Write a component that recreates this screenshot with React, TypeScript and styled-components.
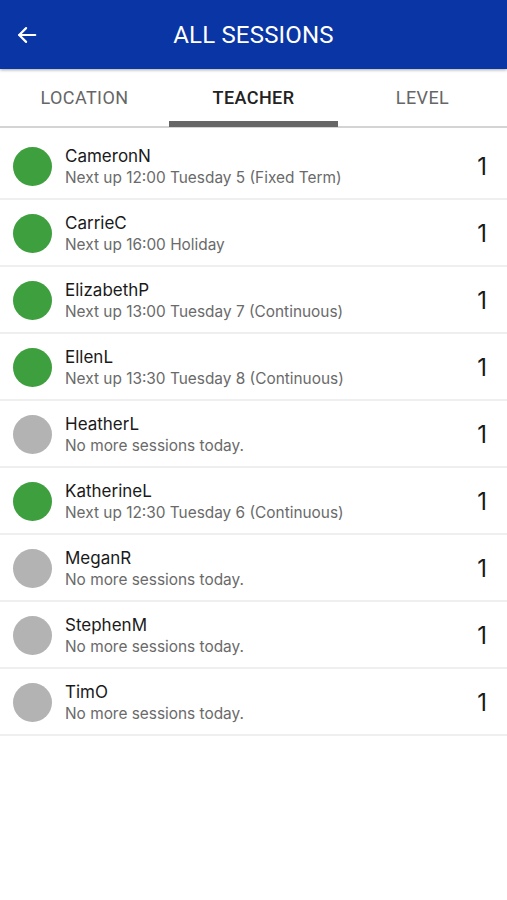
import React from "react";
import styled, { createGlobalStyle } from "styled-components";

const Global = createGlobalStyle`
  html, body { margin: 0; padding: 0; background: #fff; }
  body { font-family: Inter, "Liberation Sans", Arial, sans-serif; }
  * { box-sizing: border-box; }
`;

const Page = styled.div`
  width: 507px;
  min-height: 900px;
  background: #fff;
  display: flex;
  flex-direction: column;
`;

const Header = styled.header`
  height: 69px;
  background: #0a35a5;
  display: flex;
  align-items: center;
  position: relative;
  z-index: 2;
  box-shadow: 0 1px 3px rgba(0, 0, 0, 0.35);
`;

const BackButton = styled.button`
  width: 56px;
  height: 69px;
  border: none;
  background: none;
  padding: 0 0 0 16px;
  display: flex;
  align-items: center;
  color: #fff;
`;

const Title = styled.h1`
  flex: 1;
  margin: 0 56px 0 0;
  text-align: center;
  color: #fff;
  font-family: Roboto, "Liberation Sans", sans-serif;
  font-size: 24px;
  font-weight: 400;
  letter-spacing: 0.2px;
`;

const Tabs = styled.nav`
  display: grid;
  grid-template-columns: repeat(3, 1fr);
  height: 59px;
  border-bottom: 2px solid #d4d4d4;
`;

const Tab = styled.div<{ $active?: boolean }>`
  display: flex;
  align-items: center;
  justify-content: center;
  position: relative;
  font-family: Roboto, "Liberation Sans", sans-serif;
  font-size: 18px;
  letter-spacing: 0.4px;
  font-weight: ${(p) => (p.$active ? 500 : 400)};
  color: ${(p) => (p.$active ? "#222" : "#666")};
  padding-bottom: 1px;
`;

const Indicator = styled.span`
  position: absolute;
  left: 0;
  right: 0;
  bottom: -1px;
  height: 6px;
  background: #666;
`;

const List = styled.ul`
  list-style: none;
  margin: 5px 0 0;
  padding: 0;
`;

const Row = styled.li`
  height: 67px;
  display: flex;
  align-items: center;
  padding: 0 20px 0 13px;
  border-bottom: 2px solid #efefef;
`;

const Dot = styled.span<{ $on: boolean }>`
  width: 39px;
  height: 39px;
  border-radius: 50%;
  background: ${(p) => (p.$on ? "#3e9f3e" : "#b3b3b3")};
  flex-shrink: 0;
  margin-top: 2px;
`;

const Texts = styled.div`
  flex: 1;
  margin-left: 13px;
  display: flex;
  flex-direction: column;
  gap: 2px;
  margin-top: 1px;
`;

const Name = styled.div`
  font-size: 17px;
  color: #1a1a1a;
`;

const Sub = styled.div`
  font-size: 15.4px;
  color: #6a6a6a;
`;

const Count = styled.div`
  font-size: 24px;
  color: #1a1a1a;
  margin-top: 2px;
`;

const rows = [
  { name: "CameronN", sub: "Next up 12:00 Tuesday 5 (Fixed Term)", on: true },
  { name: "CarrieC", sub: "Next up 16:00 Holiday", on: true },
  { name: "ElizabethP", sub: "Next up 13:00 Tuesday 7 (Continuous)", on: true },
  { name: "EllenL", sub: "Next up 13:30 Tuesday 8 (Continuous)", on: true },
  { name: "HeatherL", sub: "No more sessions today.", on: false },
  { name: "KatherineL", sub: "Next up 12:30 Tuesday 6 (Continuous)", on: true },
  { name: "MeganR", sub: "No more sessions today.", on: false },
  { name: "StephenM", sub: "No more sessions today.", on: false },
  { name: "TimO", sub: "No more sessions today.", on: false },
];

export default function App() {
  return (
    <Page>
      <Global />
      <Header>
        <BackButton aria-label="Back">
          <svg width="22" height="22" viewBox="0 0 24 24" fill="none" stroke="#fff" strokeWidth="2.4" strokeLinecap="round" strokeLinejoin="round">
            <path d="M21 12H3.5" />
            <path d="M11 4.5L3.5 12l7.5 7.5" />
          </svg>
        </BackButton>
        <Title>ALL SESSIONS</Title>
      </Header>
      <Tabs>
        <Tab>LOCATION</Tab>
        <Tab $active>
          TEACHER
          <Indicator />
        </Tab>
        <Tab>LEVEL</Tab>
      </Tabs>
      <List>
        {rows.map((r) => (
          <Row key={r.name}>
            <Dot $on={r.on} />
            <Texts>
              <Name>{r.name}</Name>
              <Sub>{r.sub}</Sub>
            </Texts>
            <Count>1</Count>
          </Row>
        ))}
      </List>
    </Page>
  );
}
